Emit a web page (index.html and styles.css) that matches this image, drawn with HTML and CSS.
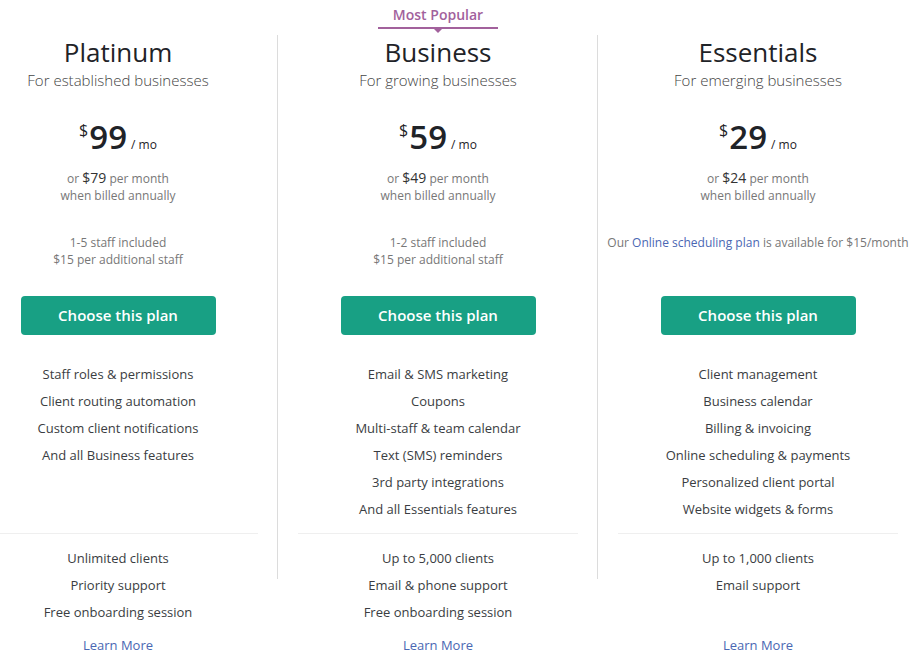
FILE: index.html
```html
<!DOCTYPE html>
<html>
<head>
<meta charset="utf-8">
<link rel="stylesheet" href="styles.css">
</head>
<body>
<div class="plans">
  <div class="plan divided">
    <div class="badge-slot"></div>
    <h2 class="title">Platinum</h2>
    <div class="subtitle">For established businesses</div>
    <div class="price"><span class="cur">$</span><span class="amount">99</span><span class="per">/ mo</span></div>
    <div class="annual">or <span class="alt">$79</span> per month<br>when billed annually</div>
    <div class="staff">1-5 staff included<br>$15 per additional staff</div>
    <a class="btn">Choose this plan</a>
    <ul class="features">
      <li>Staff roles &amp; permissions</li>
      <li>Client routing automation</li>
      <li>Custom client notifications</li>
      <li>And all Business features</li>
    </ul>
    <hr class="sep">
    <ul class="extras">
      <li>Unlimited clients</li>
      <li>Priority support</li>
      <li>Free onboarding session</li>
    </ul>
    <a class="learn">Learn More</a>
  </div>
  <div class="plan divided">
    <div class="badge-slot"><span class="badge">Most Popular</span></div>
    <h2 class="title">Business</h2>
    <div class="subtitle">For growing businesses</div>
    <div class="price"><span class="cur">$</span><span class="amount">59</span><span class="per">/ mo</span></div>
    <div class="annual">or <span class="alt">$49</span> per month<br>when billed annually</div>
    <div class="staff">1-2 staff included<br>$15 per additional staff</div>
    <a class="btn">Choose this plan</a>
    <ul class="features">
      <li>Email &amp; SMS marketing</li>
      <li>Coupons</li>
      <li>Multi-staff &amp; team calendar</li>
      <li>Text (SMS) reminders</li>
      <li>3rd party integrations</li>
      <li>And all Essentials features</li>
    </ul>
    <hr class="sep">
    <ul class="extras">
      <li>Up to 5,000 clients</li>
      <li>Email &amp; phone support</li>
      <li>Free onboarding session</li>
    </ul>
    <a class="learn">Learn More</a>
  </div>
  <div class="plan">
    <div class="badge-slot"></div>
    <h2 class="title">Essentials</h2>
    <div class="subtitle">For emerging businesses</div>
    <div class="price"><span class="cur">$</span><span class="amount">29</span><span class="per">/ mo</span></div>
    <div class="annual">or <span class="alt">$24</span> per month<br>when billed annually</div>
    <div class="staff">Our <a class="inline-link">Online scheduling plan</a> is available for $15/month</div>
    <a class="btn">Choose this plan</a>
    <ul class="features">
      <li>Client management</li>
      <li>Business calendar</li>
      <li>Billing &amp; invoicing</li>
      <li>Online scheduling &amp; payments</li>
      <li>Personalized client portal</li>
      <li>Website widgets &amp; forms</li>
    </ul>
    <hr class="sep">
    <ul class="extras">
      <li>Up to 1,000 clients</li>
      <li>Email support</li>
    </ul>
    <a class="learn">Learn More</a>
  </div>
</div>
</body>
</html>
```

FILE: styles.css
```css
* { box-sizing: border-box; }
html, body {
  margin: 0;
  padding: 0;
  background: #fff;
  overflow: hidden;
}
body {
  font-family: "Open Sans", "Noto Sans", sans-serif;
  color: #333;
  width: 917px;
  height: 671px;
}
.plans {
  display: flex;
  margin-left: -42px;
  width: 960px;
}
.plan {
  position: relative;
  width: 320px;
  display: flex;
  flex-direction: column;
  align-items: center;
  text-align: center;
}
.plan.divided::after {
  content: "";
  position: absolute;
  right: 0;
  top: 35px;
  height: 544px;
  width: 1px;
  background: #dcdcdc;
}
.badge-slot {
  height: 35px;
  width: 100%;
  display: flex;
  justify-content: center;
}
.badge {
  position: relative;
  display: block;
  width: 120px;
  height: 29px;
  padding-top: 5px;
  font-size: 14px;
  line-height: 20px;
  font-weight: 600;
  color: #a2619c;
  border-bottom: 2px solid #a2619c;
}
.badge::after {
  content: "";
  position: absolute;
  left: 50%;
  bottom: -6px;
  margin-left: -5px;
  border-left: 5px solid transparent;
  border-right: 5px solid transparent;
  border-top: 5px solid #a2619c;
}
.title {
  margin: 2px 0 0;
  font-size: 26px;
  line-height: 30px;
  font-weight: 400;
  color: #1f2328;
}
.subtitle {
  margin-top: 3px;
  font-size: 15px;
  line-height: 20px;
  font-weight: 300;
  color: #444;
}
.price {
  margin-top: 27px;
  height: 40px;
  display: flex;
  align-items: baseline;
  justify-content: center;
  color: #1f2328;
}
.cur {
  font-size: 16px;
  align-self: flex-start;
  line-height: 20px;
  margin-top: 3px;
  margin-right: 1px;
}
.amount {
  font-size: 33px;
  font-weight: 600;
  line-height: 40px;
}
.per {
  font-size: 12px;
  margin-left: 4px;
}
.annual {
  margin-top: 12px;
  font-size: 12px;
  line-height: 17px;
  color: #777;
}
.alt {
  font-size: 14px;
  color: #333;
}
.staff {
  margin-top: 30px;
  height: 34px;
  font-size: 12px;
  line-height: 17px;
  color: #777;
  white-space: nowrap;
}
.inline-link {
  color: #4a67b3;
}
.btn {
  margin-top: 28px;
  display: flex;
  align-items: center;
  justify-content: center;
  width: 195px;
  height: 39px;
  border-radius: 4px;
  background: #18a084;
  color: #fff;
  font-size: 15px;
  font-weight: 600;
  padding-bottom: 1px;
}
.features, .extras {
  list-style: none;
  margin: 0;
  padding: 0;
  font-size: 13px;
  line-height: 27px;
  color: #3a3d42;
}
.features {
  margin-top: 26px;
  height: 162px;
}
.sep {
  align-self: stretch;
  margin: 10px 20px 11px;
  border: 0;
  height: 1px;
  background: #efefef;
}
.extras {
  min-height: 81px;
}
.learn {
  margin-top: 6px;
  font-size: 13px;
  line-height: 27px;
  color: #4a67b3;
}
```
